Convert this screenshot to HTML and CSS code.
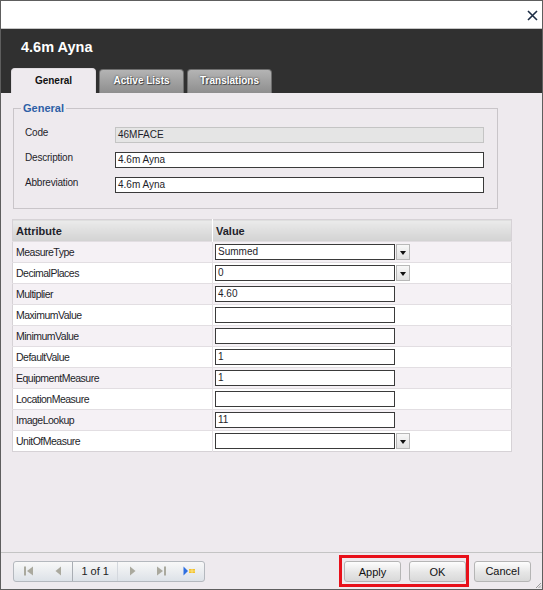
FILE: index.html
```html
<!DOCTYPE html>
<html lang="en">

<head>
  <meta charset="UTF-8">
  <meta name="viewport" content="width=device-width, initial-scale=1.0">
  <link rel="stylesheet" href="styles.css">
  <title>4.6m Ayna</title>
</head>

<body>
  <div class="dialog">
    <div class="topBar">
      <svg class="closeIcon" width="11" height="11" viewBox="0 0 11 11">
        <path d="M1 1 L10 10 M10 1 L1 10" stroke="#1c2c44" stroke-width="1.6" fill="none" />
      </svg>
    </div>

    <div class="header">
      <h1 class="title">4.6m Ayna</h1>
      <div class="tabs">
        <div class="tab active">General</div>
        <div class="tab">Active Lists</div>
        <div class="tab">Translations</div>
      </div>
    </div>

    <div class="content">
      <fieldset class="generalBox">
        <legend>General</legend>
        <div class="formGrid">
          <label>Code</label>
          <div class="field readonly">46MFACE</div>
          <label>Description</label>
          <div class="field">4.6m Ayna</div>
          <label>Abbreviation</label>
          <div class="field">4.6m Ayna</div>
        </div>
      </fieldset>

      <table class="attrTable">
        <tr>
          <th class="colAttr">Attribute</th>
          <th>Value</th>
        </tr>
        <tr>
          <td>MeasureType</td>
          <td><div class="combo"><div class="cell">Summed</div><span class="dropBtn"></span></div></td>
        </tr>
        <tr>
          <td>DecimalPlaces</td>
          <td><div class="combo"><div class="cell">0</div><span class="dropBtn"></span></div></td>
        </tr>
        <tr>
          <td>Multiplier</td>
          <td><div class="cell">4.60</div></td>
        </tr>
        <tr>
          <td>MaximumValue</td>
          <td><div class="cell"></div></td>
        </tr>
        <tr>
          <td>MinimumValue</td>
          <td><div class="cell"></div></td>
        </tr>
        <tr>
          <td>DefaultValue</td>
          <td><div class="cell">1</div></td>
        </tr>
        <tr>
          <td>EquipmentMeasure</td>
          <td><div class="cell">1</div></td>
        </tr>
        <tr>
          <td>LocationMeasure</td>
          <td><div class="cell"></div></td>
        </tr>
        <tr>
          <td>ImageLookup</td>
          <td><div class="cell">11</div></td>
        </tr>
        <tr>
          <td>UnitOfMeasure</td>
          <td><div class="combo"><div class="cell"></div><span class="dropBtn"></span></div></td>
        </tr>
      </table>
    </div>

    <div class="footer">
      <div class="pager">
        <span class="pgBtn">
          <svg width="10" height="10" viewBox="0 0 10 10"><rect x="0" y="0.5" width="2" height="9" fill="#aaa99e" /><path d="M9 0.5 L3 5 L9 9.5 Z" fill="#aaa99e" /></svg>
        </span>
        <span class="pgBtn">
          <svg width="7" height="10" viewBox="0 0 7 10"><path d="M6 0.5 L0.5 5 L6 9.5 Z" fill="#aaa99e" /></svg>
        </span>
        <span class="pgInfo">1 of 1</span>
        <span class="pgBtn">
          <svg width="7" height="10" viewBox="0 0 7 10"><path d="M1 0.5 L6.5 5 L1 9.5 Z" fill="#aaa99e" /></svg>
        </span>
        <span class="pgBtn">
          <svg width="10" height="10" viewBox="0 0 10 10"><path d="M1 0.5 L7 5 L1 9.5 Z" fill="#aaa99e" /><rect x="8" y="0.5" width="2" height="9" fill="#aaa99e" /></svg>
        </span>
        <span class="pgBtn">
          <svg width="13" height="10" viewBox="0 0 13 10"><path d="M0.5 0.5 L5 5 L0.5 9.5 Z" fill="#2f6fe0" /><rect x="6" y="3" width="6" height="4" fill="#f2c12e" /><path d="M6 5 H12 M9 3 V7" stroke="#fff3b0" stroke-width="0.6" /></svg>
        </span>
      </div>

      <div class="actions">
        <div class="highlight">
          <button class="btn">Apply</button>
          <button class="btn">OK</button>
        </div>
        <button class="btn">Cancel</button>
      </div>

      <svg class="grip" width="7" height="7" viewBox="0 0 7 7">
        <path d="M6 1 L1 6 M6 3.5 L3.5 6 M6 5.5 L5.5 6" stroke="#9a9a9a" stroke-width="1" />
      </svg>
    </div>
  </div>
</body>

</html>
```

FILE: styles.css
```css
* {
  box-sizing: border-box;
}

body {
  margin: 0;
  font-family: "Liberation Sans", Arial, sans-serif;
  font-size: 10px;
  color: #1e1e2a;
}

.dialog {
  width: 543px;
  height: 590px;
  border: 1px solid #5e5e5e;
  background-color: #eeeaee;
  display: flex;
  flex-direction: column;
}

.topBar {
  height: 28px;
  background-color: #fff;
  border-bottom: 1px solid #c6c6c6;
  display: flex;
  justify-content: flex-end;
  align-items: center;
  padding-right: 4px;
}

.closeIcon {
  margin-top: 1px;
}

.header {
  background-color: #303030;
  height: 64px;
  padding: 10px 0 0 10px;
  display: flex;
  flex-direction: column;
}

.title {
  margin: 0 0 12px 10px;
  font-size: 14.5px;
  line-height: 17px;
  font-weight: bold;
  color: #fff;
}

.tabs {
  display: flex;
  gap: 3px;
  align-items: flex-end;
  height: 25px;
}

.tab {
  width: 85px;
  height: 24px;
  border-radius: 4px 4px 0 0;
  background: linear-gradient(#b4b4b4, #8e8e8e);
  border: 1px solid #6e6e6e;
  border-bottom: none;
  color: #fff;
  font-weight: bold;
  font-size: 10px;
  text-align: center;
  line-height: 22px;
  text-shadow: 0 0 2px #333, 1px 1px 0 #555;
}

.tab.active {
  height: 25px;
  background: #eeeaee;
  border-color: #e0dce0;
  color: #111;
  text-shadow: none;
  line-height: 24px;
}

.content {
  flex: 1;
  padding-top: 9px;
}

.generalBox {
  margin: 0 44px 0 12px;
  padding: 0 13px 15px 11px;
  border: 1px solid #c9c5c9;
}

.generalBox legend {
  margin-left: -4px;
  padding: 0 2px;
  font-size: 11px;
  line-height: 13px;
  font-weight: bold;
  color: #2d5fa6;
}

.formGrid {
  margin-top: 12px;
  display: grid;
  grid-template-columns: 90px 1fr;
  grid-auto-rows: 16px;
  row-gap: 9px;
}

.formGrid label {
  letter-spacing: -0.2px;
  line-height: 12px;
}

.field {
  height: 16px;
  border: 1px solid #3a3a3a;
  background-color: #fff;
  padding: 0 2px;
  line-height: 14px;
  white-space: nowrap;
}

.field.readonly {
  background-color: #e5e5e5;
  border-color: #c4c4c4;
}

.attrTable {
  margin: 10px 0 0 11px;
  width: 500px;
  border-collapse: collapse;
  border: 1px solid #d6d2d6;
  background-color: #fff;
}

.attrTable th {
  height: 22px;
  text-align: left;
  padding: 0 3px;
  font-size: 11px;
  font-weight: bold;
  background: linear-gradient(#ebebeb, #d2d2d2);
  border-left: 1px solid #fff;
}

.attrTable th.colAttr {
  width: 200px;
  border-left: none;
}

.attrTable td {
  height: 21px;
  padding: 0 1px 0 3px;
  border-top: 1px solid #e2dee2;
  border-left: 1px solid #e2dee2;
  font-size: 10.5px;
  letter-spacing: -0.5px;
  vertical-align: middle;
}

.attrTable td:first-child {
  border-left: none;
}

.attrTable td + td {
  padding-left: 2px;
  font-size: 10px;
  letter-spacing: 0;
}

.attrTable tr:nth-child(even) td {
  background-color: #f5f1f5;
}

.cell {
  width: 180px;
  height: 16px;
  border: 1px solid #3a3a3a;
  background-color: #fff;
  padding: 0 2px;
  line-height: 14px;
}

.combo {
  display: flex;
  gap: 1px;
}

.dropBtn {
  width: 14px;
  height: 16px;
  border: 1px solid #b8b8b8;
  background: linear-gradient(#f8f8f8, #e2e2e2);
  display: flex;
  align-items: center;
  justify-content: center;
}

.dropBtn::after {
  content: "";
  border-left: 3px solid transparent;
  border-right: 3px solid transparent;
  border-top: 4px solid #111;
  margin-top: 1px;
}

.footer {
  height: 37px;
  border-top: 1px solid #c4c4c4;
  display: flex;
  align-items: center;
  justify-content: space-between;
  padding: 0 11px 0 12px;
  position: relative;
}

.pager {
  width: 192px;
  height: 21px;
  border: 1px solid #b4b8be;
  border-radius: 3px;
  background: linear-gradient(#f8f8f8, #dde2e8);
  display: flex;
  align-items: center;
}

.pgBtn {
  width: 29px;
  height: 100%;
  display: flex;
  align-items: center;
  justify-content: center;
}

.pgBtn:first-child {
  margin-left: 1px;
}

.pgInfo {
  width: 46px;
  height: 100%;
  border-left: 1px solid #a9adb3;
  border-right: 1px solid #d4d8de;
  text-align: center;
  line-height: 19px;
  font-size: 11px;
  color: #222;
}

.actions {
  display: flex;
  align-items: center;
  gap: 5px;
}

.highlight {
  display: flex;
  gap: 8px;
  border: 3px solid #e8101a;
  padding: 3px 0 2px 2px;
}

.btn {
  width: 57px;
  height: 21px;
  border: 1px solid #b5b5b5;
  border-radius: 3px;
  background: linear-gradient(#fdfdfd, #e6e6e6 55%, #d9d9d9);
  font-family: "Liberation Sans", Arial, sans-serif;
  font-size: 11px;
  color: #111;
  padding: 0;
}

.grip {
  position: absolute;
  right: 0;
  bottom: 0;
}
```
